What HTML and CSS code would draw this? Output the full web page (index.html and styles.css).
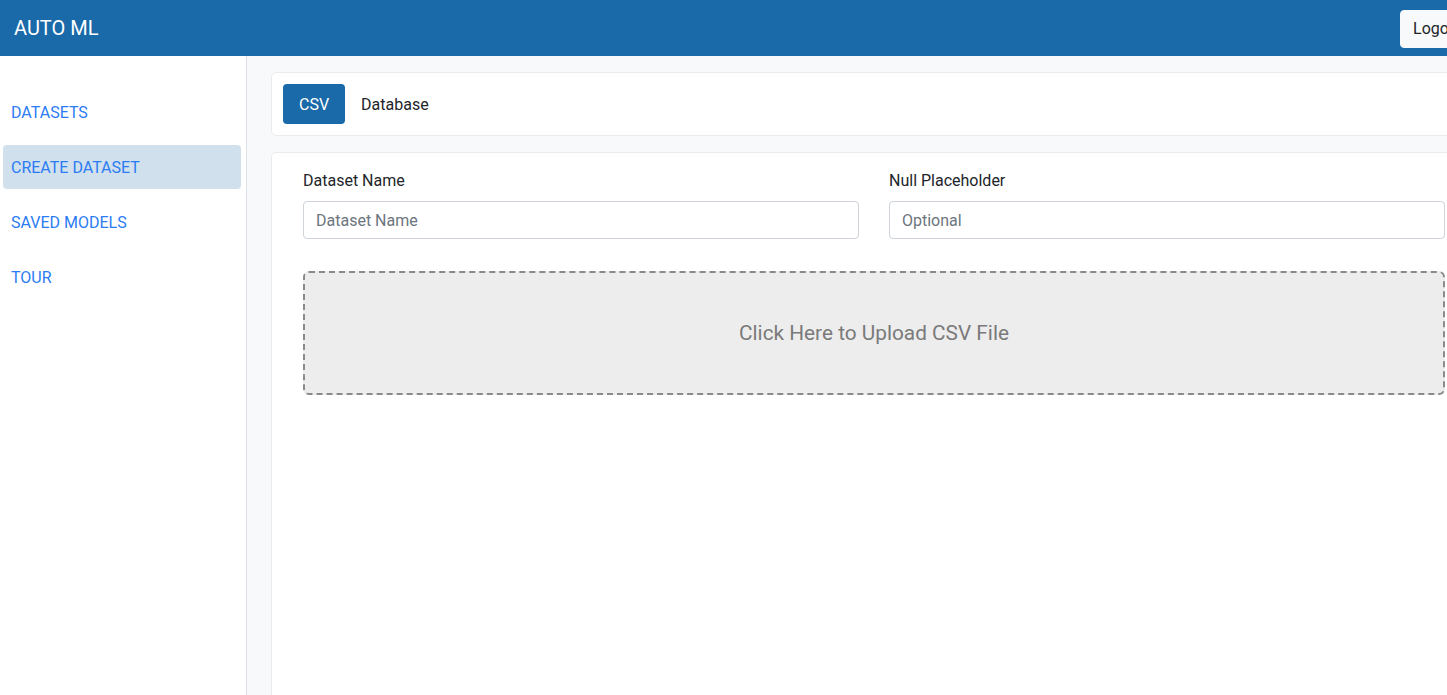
FILE: index.html
```html
<!DOCTYPE html>
<html lang="en">
<head>
<meta charset="utf-8">
<title>AUTO ML</title>
<link rel="stylesheet" href="styles.css">
</head>
<body>
<div class="page">
  <header class="topbar">
    <div class="brand">AUTO ML</div>
    <button class="logout">Logout</button>
  </header>
  <div class="layout">
    <nav class="sidebar">
      <a class="nav-item">DATASETS</a>
      <a class="nav-item active">CREATE DATASET</a>
      <a class="nav-item">SAVED MODELS</a>
      <a class="nav-item">TOUR</a>
    </nav>
    <main class="main">
      <div class="card tabs">
        <button class="tab active">CSV</button>
        <button class="tab">Database</button>
      </div>
      <div class="card form-card">
        <div class="row">
          <div class="field">
            <label class="label">Dataset Name</label>
            <input class="input" type="text" placeholder="Dataset Name">
          </div>
          <div class="field">
            <label class="label">Null Placeholder</label>
            <input class="input" type="text" placeholder="Optional">
          </div>
        </div>
        <div class="upload">Click Here to Upload CSV File</div>
      </div>
    </main>
  </div>
</div>
</body>
</html>
```

FILE: styles.css
```css
* { box-sizing: border-box; }
html, body { margin: 0; padding: 0; }
body {
  font-family: Roboto, "Liberation Sans", Arial, sans-serif;
  color: #212529;
  background: #fff;
  overflow: hidden;
}
.page {
  width: 1501px;
  height: 695px;
  display: flex;
  flex-direction: column;
}
.topbar {
  height: 56px;
  flex: none;
  background: #1a69a8;
  display: flex;
  align-items: center;
  justify-content: space-between;
  padding: 0 25px 0 14px;
}
.brand {
  color: #fff;
  font-size: 20px;
  font-weight: 400;
}
.logout {
  font-family: inherit;
  font-size: 16px;
  color: #212529;
  background: #f8f9fa;
  border: 1px solid #f8f9fa;
  border-radius: 4px;
  height: 38px;
  padding: 0 12px;
  margin-top: 1px;
}
.layout {
  flex: 1;
  display: flex;
  min-height: 0;
}
.sidebar {
  width: 247px;
  flex: none;
  background: #fff;
  border-right: 1px solid #dee2e6;
  padding: 34px 5px 0 3px;
  display: flex;
  flex-direction: column;
  gap: 11px;
}
.nav-item {
  display: flex;
  align-items: center;
  height: 44px;
  padding-left: 8px;
  color: #2b7cf3;
  font-size: 16px;
  border-radius: 4px;
  text-decoration: none;
}
.nav-item.active {
  background: #d1e0ed;
}
.main {
  flex: 1;
  background: #f8f9fa;
  padding: 16px 24px 0 24px;
  display: flex;
  flex-direction: column;
  gap: 16px;
}
.card {
  background: #fff;
  border: 1px solid #e9ecef;
  border-radius: 5px;
}
.tabs {
  display: flex;
  align-items: center;
  padding: 11px 11px;
}
.tab {
  font-family: inherit;
  font-size: 16px;
  height: 40px;
  padding: 0 16px;
  border: none;
  background: transparent;
  color: #212529;
  border-radius: 4px;
}
.tab.active {
  background: #1a69a8;
  color: #fff;
}
.form-card {
  flex: 1;
  padding: 16px 31px 0 31px;
  border-bottom: none;
  border-bottom-left-radius: 0;
  border-bottom-right-radius: 0;
}
.row {
  display: flex;
  gap: 30px;
}
.field {
  flex: 1;
  display: flex;
  flex-direction: column;
}
.label {
  font-size: 16px;
  line-height: 24px;
  margin-bottom: 8px;
  color: #212529;
}
.input {
  font-family: inherit;
  font-size: 16px;
  height: 38px;
  padding: 0 12px;
  border: 1px solid #ced4da;
  border-radius: 4px;
  color: #212529;
  background: #fff;
}
.input::placeholder { color: #6c757d; }
.upload {
  margin-top: 32px;
  height: 124px;
  background: #ededed;
  border: 2px dashed #8a8a8a;
  border-radius: 6px;
  display: flex;
  align-items: center;
  justify-content: center;
  font-size: 20.8px;
  color: #7a7a7a;
}
```
